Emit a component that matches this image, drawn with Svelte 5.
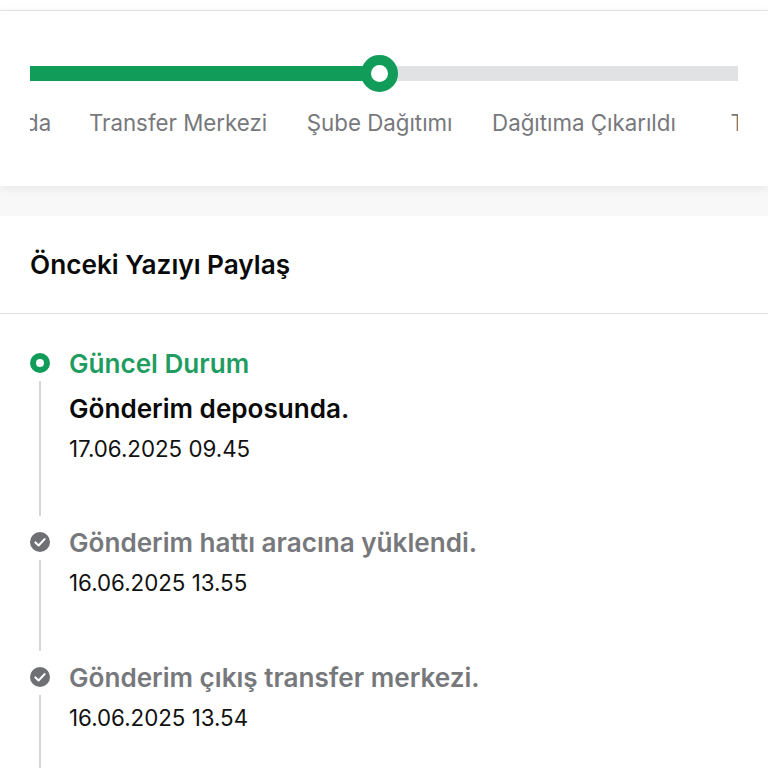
<script>
  const labels = ["Depoda", "Transfer Merkezi", "Şube Dağıtımı", "Dağıtıma Çıkarıldı", "Teslim Edildi"];
  const done = [
    { title: "Gönderim hattı aracına yüklendi.", date: "16.06.2025 13.55" },
    { title: "Gönderim çıkış transfer merkezi.", date: "16.06.2025 13.54" }
  ];
</script>

<div class="page">
  <div class="topbar"></div>
  <section class="card">
    <div class="track">
      <div class="fill"></div>
      <div class="knob"></div>
    </div>
    <div class="labels">
      {#each labels as label}
        <span class="label">{label}</span>
      {/each}
    </div>
  </section>
  <div class="band"></div>
  <h2 class="share">Önceki Yazıyı Paylaş</h2>
  <section class="timeline">
    <div class="item current">
      <div class="rail">
        <span class="ring"></span>
        <span class="line"></span>
      </div>
      <div class="body">
        <div class="status">Güncel Durum</div>
        <div class="title">Gönderim deposunda.</div>
        <div class="date">17.06.2025 09.45</div>
      </div>
    </div>
    {#each done as row}
      <div class="item">
        <div class="rail">
          <svg class="check" viewBox="0 0 20 20" width="20" height="20">
            <circle cx="10" cy="10" r="10" fill="#6f7074" />
            <path d="M5.4 10.4l3.2 3.1 6-6.4" fill="none" stroke="#fff" stroke-width="2.1" stroke-linecap="round" stroke-linejoin="round" />
          </svg>
          <span class="line"></span>
        </div>
        <div class="body">
          <div class="title muted">{row.title}</div>
          <div class="date">{row.date}</div>
        </div>
      </div>
    {/each}
  </section>
</div>

<style>
  :global(body) {
    margin: 0;
    background: #fff;
  }
  .page {
    height: 768px;
    overflow: hidden;
    font-family: Inter, "Liberation Sans", sans-serif;
    background: #fff;
  }
  .topbar {
    height: 10px;
    border-bottom: 1px solid #e6e6e8;
  }
  .card {
    position: relative;
    height: 175px;
    box-sizing: border-box;
    padding: 44px 30px 0;
    background: #fff;
    box-shadow: 0 2px 10px rgba(0, 0, 0, 0.08);
  }
  .track {
    position: relative;
    height: 15px;
    margin-top: 11px;
    background: #e1e2e4;
  }
  .fill {
    width: 340px;
    height: 100%;
    background: #129c59;
  }
  .knob {
    position: absolute;
    left: 331px;
    top: -11px;
    width: 17px;
    height: 17px;
    border: 10px solid #129c59;
    border-radius: 50%;
    background: #fff;
  }
  .labels {
    display: flex;
    gap: 39.6px;
    margin-top: 27px;
    overflow: hidden;
    font-size: 22.3px;
    line-height: 30px;
    color: #77787c;
    white-space: nowrap;
  }
  .label {
    flex: none;
  }
  .label:first-child {
    margin-left: -61px;
    margin-right: -2px;
  }
  .label:last-child {
    margin-left: 15px;
  }
  .band {
    height: 30px;
    background: #f8f8f9;
  }
  .share {
    display: flex;
    align-items: center;
    height: 98px;
    margin: 0;
    padding: 0 30px;
    box-sizing: border-box;
    border-bottom: 1px solid #e0e1e3;
    font-size: 26.2px;
    font-weight: 600;
    color: #0a0a0a;
  }
  .timeline {
    padding: 35px 30px 0;
  }
  .item {
    display: flex;
    gap: 19px;
    height: 135px;
  }
  .item.current {
    height: 179px;
  }
  .rail {
    display: flex;
    flex-direction: column;
    align-items: center;
    flex: none;
    width: 20px;
    padding-top: 4px;
    box-sizing: border-box;
  }
  .ring {
    width: 20px;
    height: 20px;
    box-sizing: border-box;
    border: 6px solid #129c59;
    border-radius: 50%;
    background: #fff;
    flex: none;
  }
  .check {
    flex: none;
    display: block;
  }
  .line {
    width: 2px;
    margin-top: 8px;
    margin-bottom: 12px;
    flex: 1;
    background: #d6d6d8;
  }
  .body {
    padding-top: 1px;
  }
  .status {
    font-size: 26.1px;
    font-weight: 600;
    line-height: 28px;
    color: #1f9d61;
    margin-bottom: 17px;
  }
  .title {
    font-size: 26.1px;
    font-weight: 600;
    line-height: 28px;
    color: #0a0a0a;
    white-space: nowrap;
  }
  .title.muted {
    color: #77787c;
  }
  .date {
    margin-top: 12px;
    font-size: 22.3px;
    line-height: 28px;
    color: #111;
  }
</style>
